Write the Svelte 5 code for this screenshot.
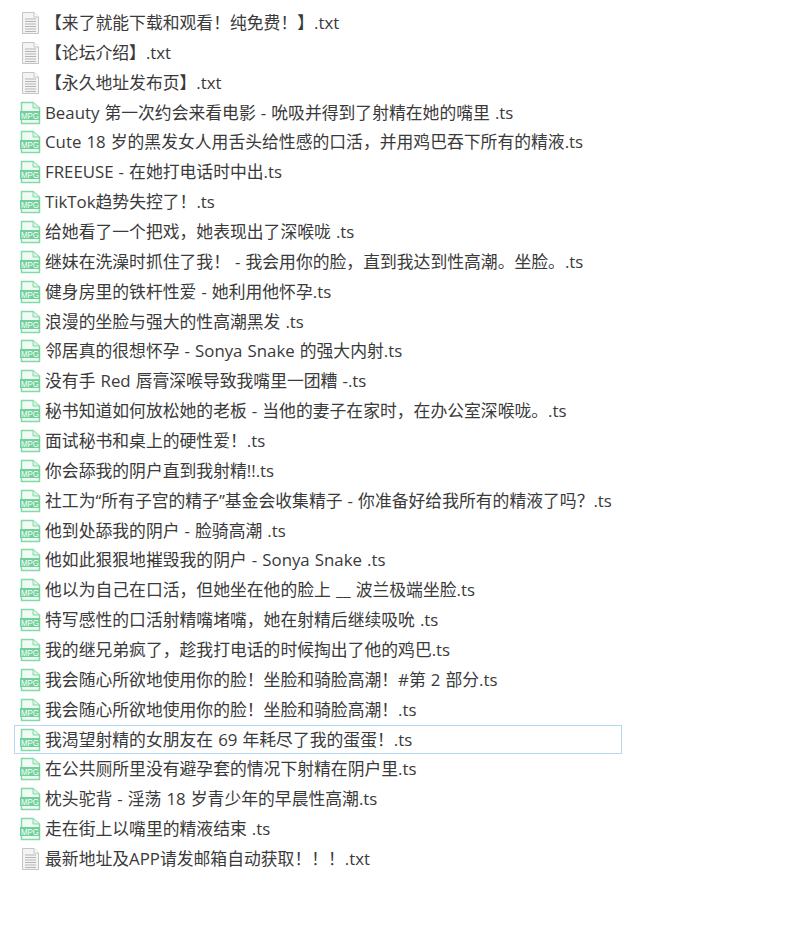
<script>
  const files = [
    ['t', '【来了就能下载和观看！纯免费！】.txt'],
    ['t', '【论坛介绍】.txt'],
    ['t', '【永久地址发布页】.txt'],
    ['m', 'Beauty 第一次约会来看电影 - 吮吸并得到了射精在她的嘴里 .ts'],
    ['m', 'Cute 18 岁的黑发女人用舌头给性感的口活，并用鸡巴吞下所有的精液.ts'],
    ['m', 'FREEUSE - 在她打电话时中出.ts'],
    ['m', 'TikTok趋势失控了！.ts'],
    ['m', '给她看了一个把戏，她表现出了深喉咙 .ts'],
    ['m', '继妹在洗澡时抓住了我！ - 我会用你的脸，直到我达到性高潮。坐脸。.ts'],
    ['m', '健身房里的铁杆性爱 - 她利用他怀孕.ts'],
    ['m', '浪漫的坐脸与强大的性高潮黑发 .ts'],
    ['m', '邻居真的很想怀孕 - Sonya Snake 的强大内射.ts'],
    ['m', '没有手 Red 唇膏深喉导致我嘴里一团糟 -.ts'],
    ['m', '秘书知道如何放松她的老板 - 当他的妻子在家时，在办公室深喉咙。.ts'],
    ['m', '面试秘书和桌上的硬性爱！.ts'],
    ['m', '你会舔我的阴户直到我射精!!.ts'],
    ['m', '社工为“所有子宫的精子”基金会收集精子 - 你准备好给我所有的精液了吗？.ts'],
    ['m', '他到处舔我的阴户 - 脸骑高潮 .ts'],
    ['m', '他如此狠狠地摧毁我的阴户 - Sonya Snake .ts'],
    ['m', '他以为自己在口活，但她坐在他的脸上 __ 波兰极端坐脸.ts'],
    ['m', '特写感性的口活射精嘴堵嘴，她在射精后继续吸吮 .ts'],
    ['m', '我的继兄弟疯了，趁我打电话的时候掏出了他的鸡巴.ts'],
    ['m', '我会随心所欲地使用你的脸！坐脸和骑脸高潮！#第 2 部分.ts'],
    ['m', '我会随心所欲地使用你的脸！坐脸和骑脸高潮！.ts'],
    ['m', '我渴望射精的女朋友在 69 年耗尽了我的蛋蛋！.ts', true],
    ['m', '在公共厕所里没有避孕套的情况下射精在阴户里.ts'],
    ['m', '枕头驼背 - 淫荡 18 岁青少年的早晨性高潮.ts'],
    ['m', '走在街上以嘴里的精液结束 .ts'],
    ['t', '最新地址及APP请发邮箱自动获取！！！.txt']
  ];
  const lines = [5, 7.5, 10, 12.5, 15, 17.5];
</script>

<div class="list">
  {#each files as f}
    <div class="row" class:sel={f[2]}>
      <span class="slot">
        {#if f[0] === 't'}
          <svg class="ico" width="22" height="24" viewBox="0 0 22 24">
            <path d="M3.5 1.5H15L19.5 6V22.5H3.5Z" fill="#f4f4f4" stroke="#c4c4c4" />
            <path d="M15 1.5V6H19.5" fill="#fff" stroke="#c4c4c4" />
            {#each lines as l}
              <path d={`M6 ${l + 3}H17`} stroke="#b4b4b4" />
            {/each}
          </svg>
        {:else}
          <svg class="ico" width="22" height="24" viewBox="0 0 22 24">
            <path d="M2.5 1.5H14L20.5 7V22.5H2.5Z" fill="#f1fbf5" stroke="#84d9a9" stroke-width="1.5" />
            <path d="M14 1.5V7H20.5" fill="#d8f3e3" stroke="#84d9a9" />
            <rect x="1" y="10" width="20" height="9" fill="#6fd09a" />
            <text x="11" y="17.6" text-anchor="middle" class="mpg" textLength="18" lengthAdjust="spacingAndGlyphs">MPG</text>
          </svg>
        {/if}
      </span>
      <span class="name">{f[1]}</span>
    </div>
  {/each}
</div>

<style>
  :global(body) {
    background: #fff;
  }
  .list {
    padding-top: 8px;
    height: 919px;
    font-family: "Open Sans", "Noto Sans CJK SC", sans-serif;
    font-size: 16.82px;
    word-spacing: 0.7px;
    color: #3a3a3a;
  }
  .row {
    box-sizing: border-box;
    margin-left: 14px;
    width: 608px;
    height: 29.86px;
    display: flex;
    align-items: center;
    border: 1px solid transparent;
    white-space: nowrap;
  }
  .row.sel {
    border-color: #b5d9f3;
  }
  .slot {
    flex: none;
    width: 30px;
    display: flex;
    justify-content: flex-end;
  }
  .ico {
    display: block;
    flex: none;
    transform: translateX(-4px);
  }
  .mpg {
    font-family: "Liberation Sans", sans-serif;
    font-size: 8.5px;
    fill: #ffffff;
  }
  .name {
    line-height: 24px;
  }
</style>
